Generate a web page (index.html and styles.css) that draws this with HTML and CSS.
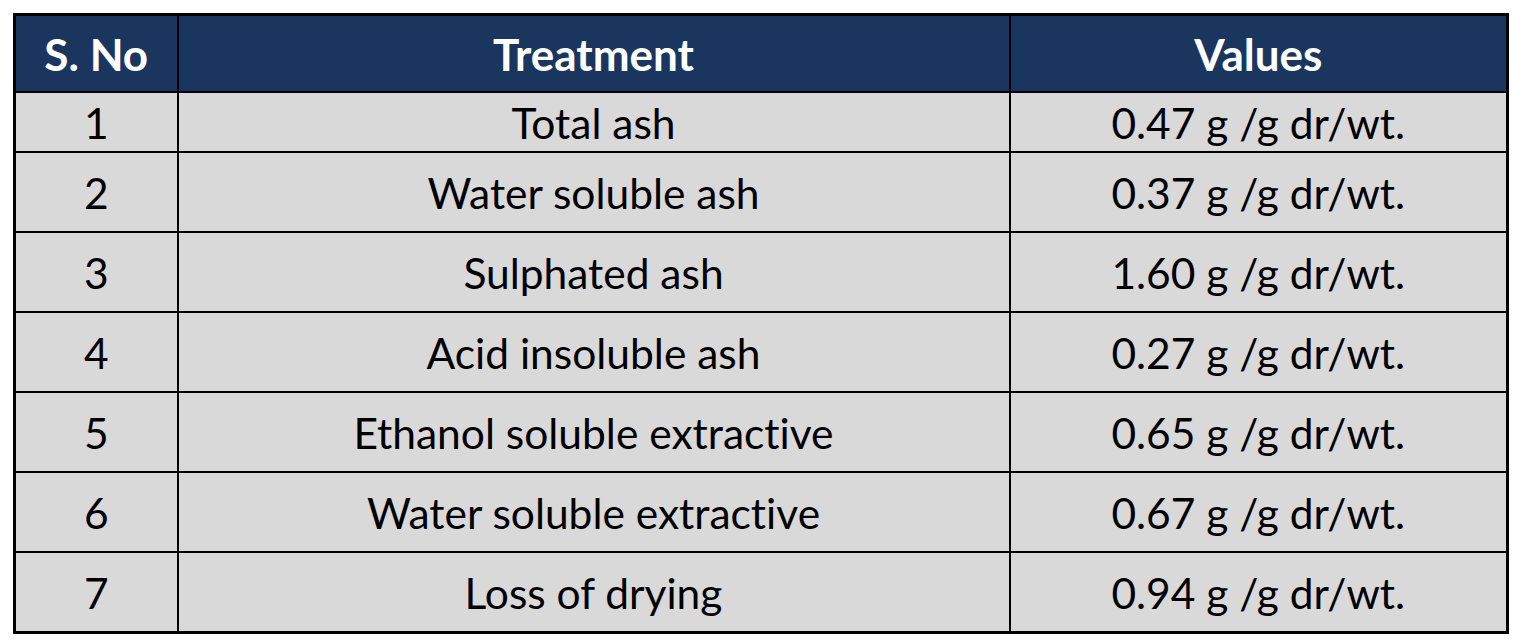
FILE: index.html
```html
<!DOCTYPE html>
<html lang="en">
<head>
<meta charset="utf-8">
<title>Treatment values</title>
<link rel="stylesheet" href="styles.css">
</head>
<body>
<table class="data-table">
  <colgroup>
    <col class="col-no">
    <col class="col-treatment">
    <col class="col-values">
  </colgroup>
  <thead>
    <tr class="head-row">
      <th>S. No</th>
      <th>Treatment</th>
      <th>Values</th>
    </tr>
  </thead>
  <tbody>
    <tr class="first-row"><td>1</td><td>Total ash</td><td>0.47 g /g dr/wt.</td></tr>
    <tr><td>2</td><td>Water soluble ash</td><td>0.37 g /g dr/wt.</td></tr>
    <tr><td>3</td><td>Sulphated ash</td><td>1.60 g /g dr/wt.</td></tr>
    <tr><td>4</td><td>Acid insoluble ash</td><td>0.27 g /g dr/wt.</td></tr>
    <tr><td>5</td><td>Ethanol soluble extractive</td><td>0.65 g /g dr/wt.</td></tr>
    <tr><td>6</td><td>Water soluble extractive</td><td>0.67 g /g dr/wt.</td></tr>
    <tr><td>7</td><td>Loss of drying</td><td>0.94 g /g dr/wt.</td></tr>
  </tbody>
</table>
</body>
</html>
```

FILE: styles.css
```css
html, body {
  margin: 0;
  background: #ffffff;
}

body {
  padding: 13px 0 0 13px;
  font-family: Lato, "Open Sans", "Liberation Sans", sans-serif;
  font-variant-ligatures: none;
}

.data-table {
  border-collapse: collapse;
  table-layout: fixed;
  width: 1493px;
  border: 3px solid #000;
}

.col-no { width: 163px; }
.col-treatment { width: 832px; }
.col-values { width: 498px; }

.data-table th,
.data-table td {
  border: 2px solid #000;
  text-align: center;
  vertical-align: middle;
  padding: 0;
}

.head-row th {
  background: #1a365e;
  color: #ffffff;
  font-weight: 700;
  font-size: 44px;
  height: 75px;
}

.data-table td {
  background: #d9d9d9;
  color: #000;
  font-size: 42.5px;
  height: 78px;
}

.data-table .first-row td {
  height: 58px;
}
```
